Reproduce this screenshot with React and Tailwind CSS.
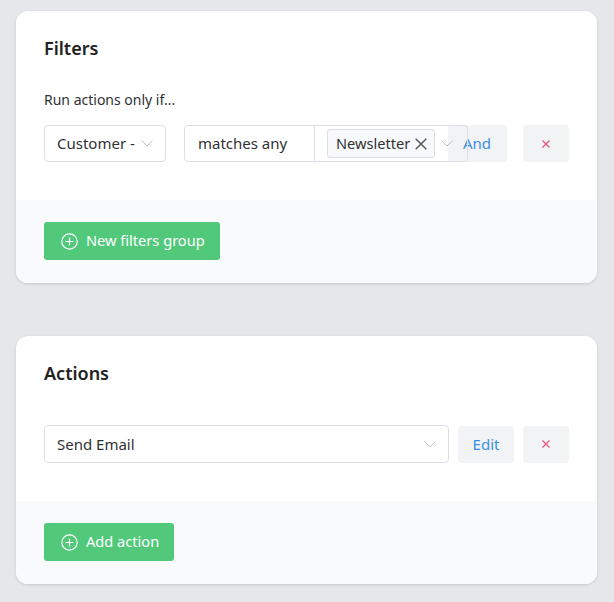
import React from "react";

const font = { fontFamily: '"Noto Sans", "Open Sans", sans-serif' };

function Chevron() {
  return (
    <svg width="12" height="7" viewBox="0 0 12 7" fill="none" className="shrink-0">
      <path d="M0.5 0.5 L6 6 L11.5 0.5" stroke="#c0c4cc" strokeWidth="1" />
    </svg>
  );
}

function PlusCircle() {
  return (
    <svg width="17" height="17" viewBox="0 0 17 17" fill="none" className="shrink-0">
      <circle cx="8.5" cy="8.5" r="7.7" stroke="white" strokeWidth="1.2" />
      <path d="M8.5 4.5 V12.5 M4.5 8.5 H12.5" stroke="white" strokeWidth="1.2" />
    </svg>
  );
}

function SmallX() {
  return (
    <svg width="8" height="8" viewBox="0 0 8 8" fill="none">
      <path d="M0.5 0.5 L7.5 7.5 M7.5 0.5 L0.5 7.5" stroke="#e0587c" strokeWidth="1.3" />
    </svg>
  );
}

function TagX() {
  return (
    <svg width="12" height="12" viewBox="0 0 12 12" fill="none">
      <path d="M0.7 0.7 L11.3 11.3 M11.3 0.7 L0.7 11.3" stroke="#555" strokeWidth="1.4" />
    </svg>
  );
}

function DeleteBtn() {
  return (
    <button className="w-[46px] h-[37px] rounded-[4px] bg-[#f2f3f4] flex items-center justify-center shrink-0">
      <SmallX />
    </button>
  );
}

function GreenBtn({ children }) {
  return (
    <button className="h-[38px] pl-[17px] pr-[15px] rounded-[3px] bg-[#52c97a] flex items-center gap-2 text-white text-[14.6px]">
      <PlusCircle />
      <span>{children}</span>
    </button>
  );
}

function Card({ title, children, footer }) {
  return (
    <div className="bg-white rounded-xl shadow-[0_1px_3px_rgba(0,0,0,0.14)] overflow-hidden">
      <div className="px-7 pt-[24px] pb-[38px]">
        <h2 className="text-[18px] leading-[26px] font-semibold text-[#222]">{title}</h2>
        {children}
      </div>
      <div className="bg-[#f9fafb] px-7 pt-[22px] pb-[23px]">{footer}</div>
    </div>
  );
}

export default function App() {
  return (
    <div className="min-h-[602px] bg-[#e5e7eb] pl-4 pr-[17px] pt-[11px] pb-4 flex flex-col gap-[53px] text-[#303133]" style={font}>
      <Card title="Filters" footer={<GreenBtn>New filters group</GreenBtn>}>
        <p className="mt-[29px] text-[14px] leading-[20px] text-[#303133]">Run actions only if...</p>
        <div className="mt-[15px] flex items-center">
          <div className="w-[122px] h-[37px] border border-[#dcdfe6] rounded-[4px] flex items-center justify-between pl-[12px] pr-[12px] text-[15px] shrink-0">
            <span className="whitespace-nowrap overflow-hidden">Customer -</span>
            <Chevron />
          </div>
          <div className="ml-[18px] flex h-[37px] relative z-10 shrink-0">
            <div className="w-[131px] h-full border border-[#dcdfe6] rounded-l-[4px] flex items-center pl-[13px] text-[15px]">
              matches any
            </div>
            <div className="w-[153px] h-full border border-l-0 border-[#dcdfe6] rounded-r-[4px] flex items-center pl-[12px] pr-[12px]">
              <div className="h-[29px] pl-2 pr-[7px] border border-[#dcdfe6] bg-[#f8f9fb] rounded-[3px] flex items-center gap-[5px] text-[14.6px]">
                <span>Newsletter</span>
                <TagX />
              </div>
              <div className="ml-[6px]"><Chevron /></div>
            </div>
          </div>
          <button className="-ml-[20px] w-[59px] h-[37px] rounded-[4px] bg-[#f2f3f4] flex items-center justify-end pr-[16px] text-[15px] text-[#3a8ee6] shrink-0">
            And
          </button>
          <div className="ml-[16px]"><DeleteBtn /></div>
        </div>
      </Card>
      <Card title="Actions" footer={<GreenBtn>Add action</GreenBtn>}>
        <div className="mt-[39px] flex items-center">
          <div className="w-[405px] h-[38px] border border-[#dcdfe6] rounded-[4px] flex items-center justify-between pl-[12px] pr-[12px] text-[15px]">
            <span>Send Email</span>
            <Chevron />
          </div>
          <button className="ml-[9px] w-[56px] h-[37px] rounded-[4px] bg-[#f2f3f4] text-[15px] text-[#3a8ee6]">Edit</button>
          <div className="ml-[9px]"><DeleteBtn /></div>
        </div>
      </Card>
    </div>
  );
}
